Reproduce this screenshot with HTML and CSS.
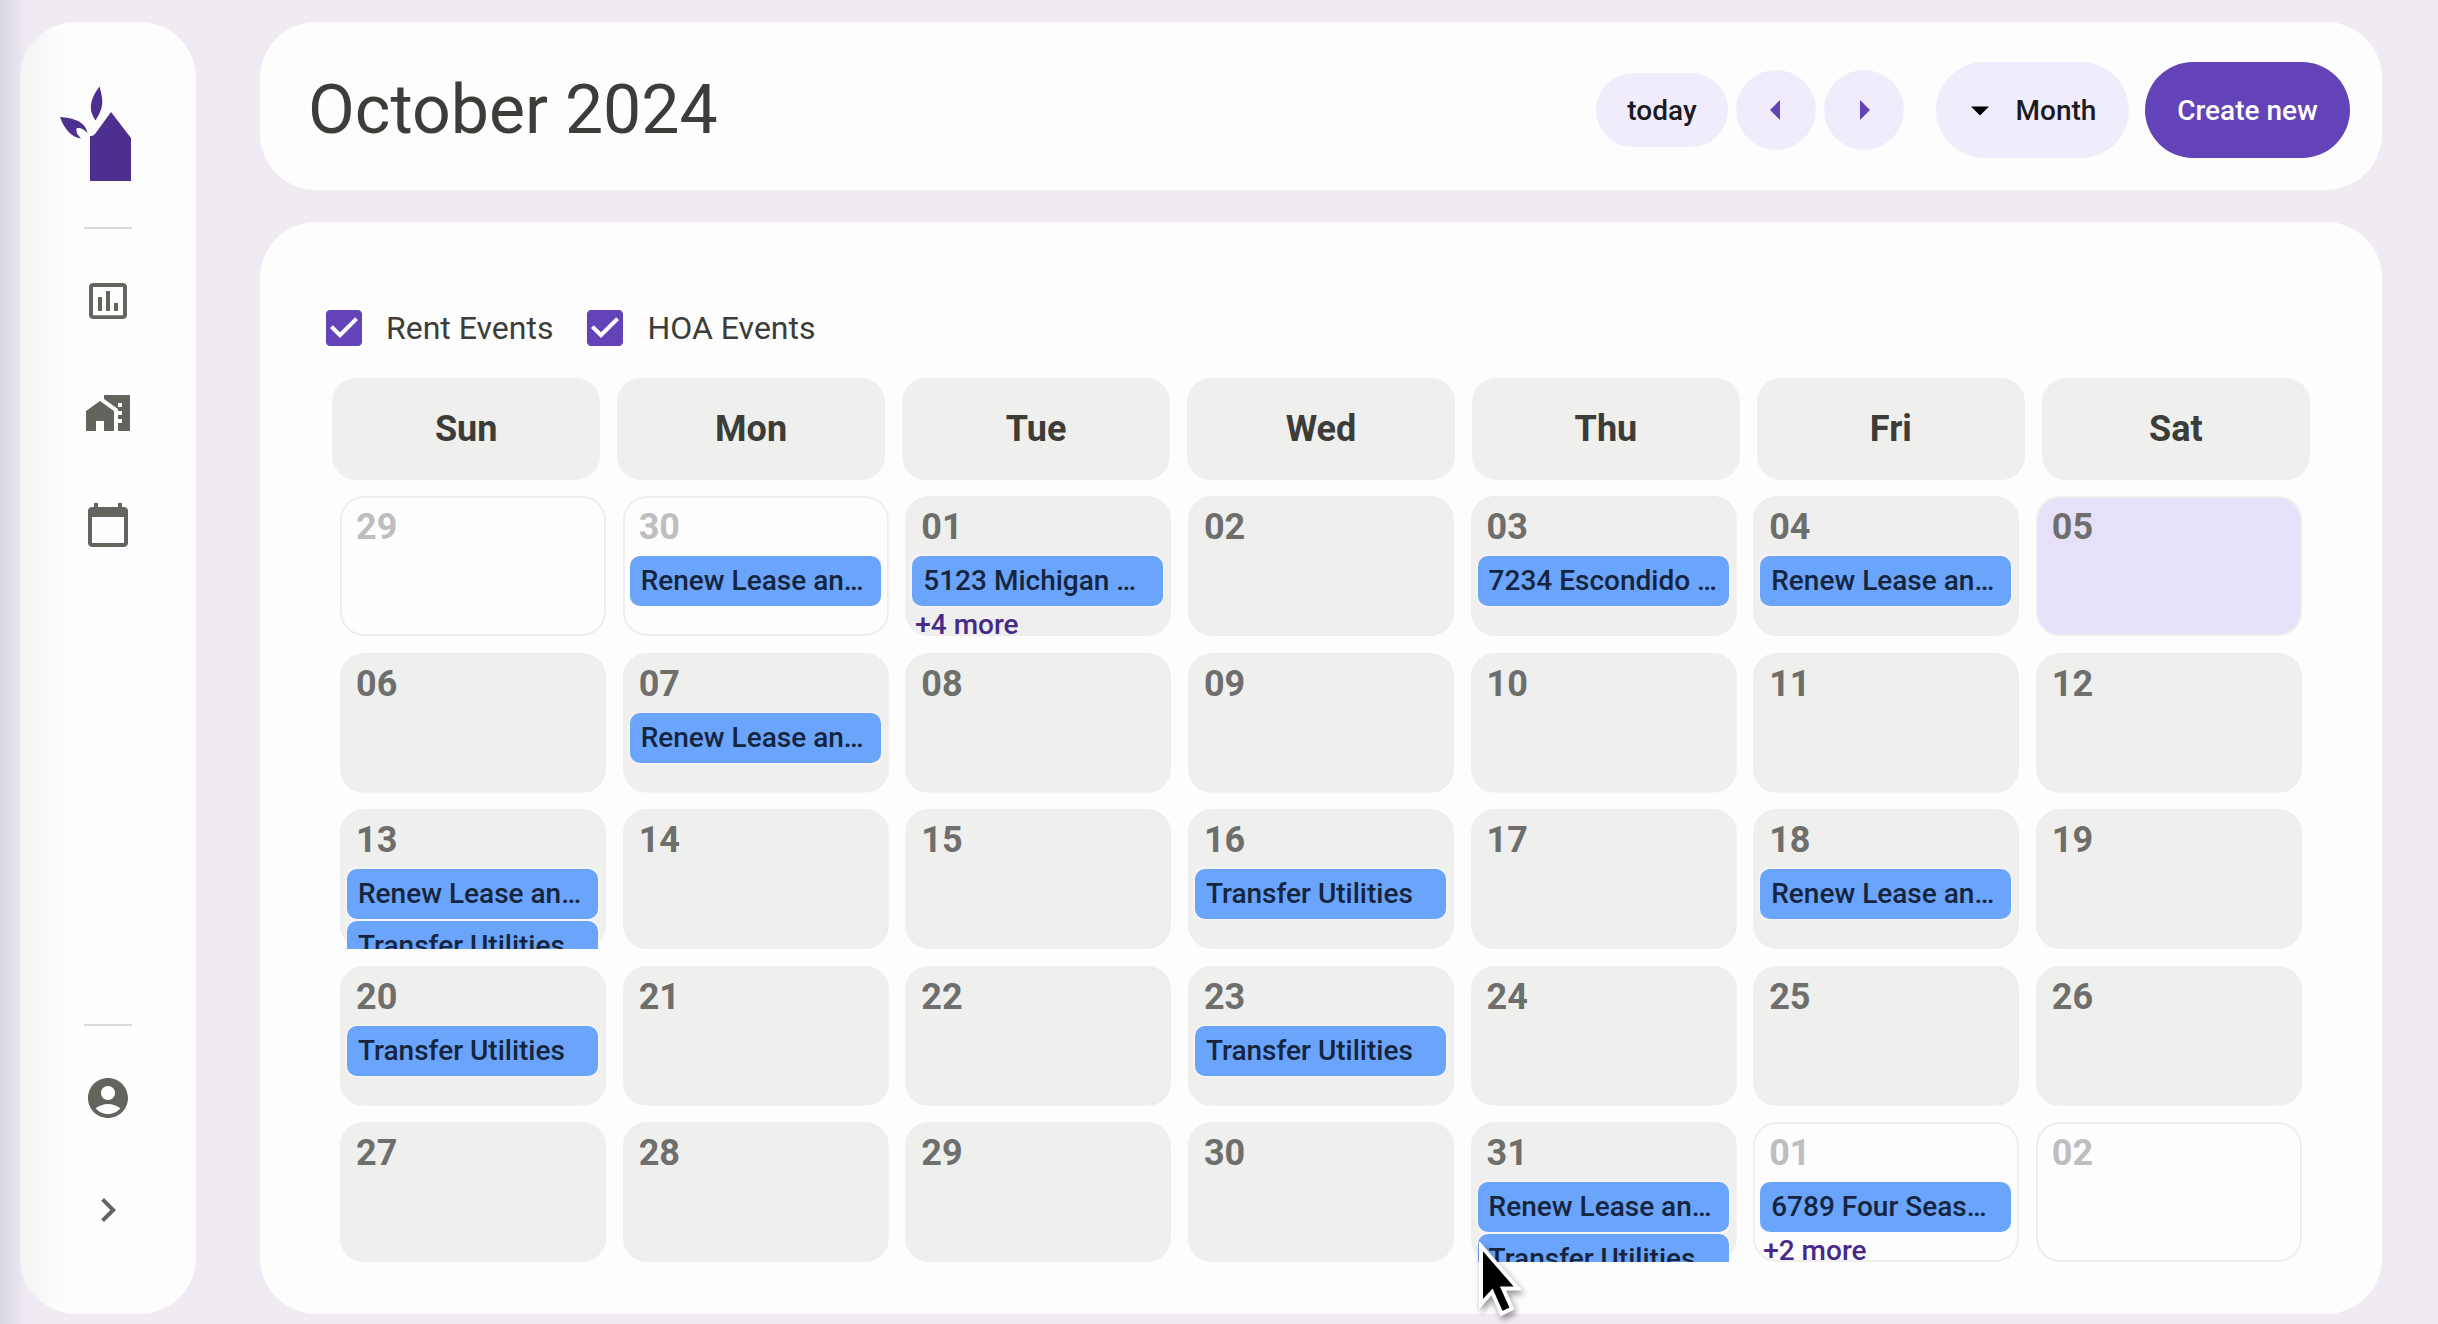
FILE: index.html
```html
<!DOCTYPE html>
<html lang="en">
<head>
<meta charset="utf-8">
<title>Calendar</title>
<link rel="stylesheet" href="styles.css">
</head>
<body>
<div class="app">
  <aside class="sidebar">
    <svg class="logo" viewBox="0 0 72 96" width="72" height="96"><path d="M39.500 0.500C43.500 15 44 21 35.500 34.500C28.500 25 29 14 39.500 0.500Z"/><path d="M0 31C13 31.500 26 36 27.500 47C24 43 19 41 16.500 42.500C16 47 18 49 21 52.500C12 51.500 4 43 0 31Z"/><path d="M30 95V50Q33 50.500 35 48L51 26L71 52V95Z"/></svg>
    <hr class="rule">
    <nav class="nav">
      <svg class="icon" viewBox="0 0 24 24"><path d="M9 17H7v-7h2v7zm4 0h-2V7h2v10zm4 0h-2v-4h2v4zm2.500 2.100h-15V5h15v14.100zm0-16.100h-15c-1.100 0-2 .9-2 2v14c0 1.100.9 2 2 2h15c1.100 0 2-.9 2-2V5c0-1.100-.9-2-2-2z"/></svg>
      <svg class="icon" viewBox="0 0 24 24"><path d="M1 11v10h5v-5h4v5h5V11L8 6z"/><path d="M10 3v1.970l7 5V11h2v2h-2v2h2v2h-2v4h6V3H10zm9 6h-2V7h2v2z"/></svg>
      <svg class="icon" viewBox="0 0 24 24"><path d="M20 3h-1V1h-2v2H7V1H5v2H4c-1.100 0-2 .9-2 2v16c0 1.100.9 2 2 2h16c1.100 0 2-.9 2-2V5c0-1.100-.9-2-2-2zm0 18H4V8h16v13z"/></svg>
    </nav>
    <div class="account">
      <hr class="rule">
      <svg class="icon" viewBox="0 0 24 24"><path d="M12 2C6.480 2 2 6.480 2 12s4.480 10 10 10 10-4.480 10-10S17.520 2 12 2zm0 4c1.930 0 3.500 1.570 3.500 3.500S13.930 13 12 13s-3.500-1.570-3.500-3.500S10.070 6 12 6zm0 14c-2.030 0-4.430-.82-6.140-2.880C7.550 15.800 9.680 15 12 15s4.450.8 6.140 2.120C16.430 19.180 14.030 20 12 20z"/></svg>
      <svg class="icon" viewBox="0 0 24 24"><path d="M10 6 8.590 7.410 13.170 12l-4.580 4.590L10 18l6-6z"/></svg>
    </div>
  </aside>
  <main class="main">
    <header class="topbar">
      <h1 class="title">October 2024</h1>
      <div class="actions">
        <button class="btn today">today</button>
        <button class="btn round"><svg width="14" height="20" viewBox="0 0 14 20"><path d="M11 0V20L1 10Z"/></svg></button>
        <button class="btn round"><svg width="14" height="20" viewBox="0 0 14 20"><path d="M3 0V20L13 10Z"/></svg></button>
        <button class="btn month"><svg width="18" height="10" viewBox="0 0 18 10"><path d="M0 0.500H18L9 9.500Z"/></svg>Month</button>
        <button class="btn create">Create new</button>
      </div>
    </header>
    <section class="panel">
      <div class="filters">
        <label class="filter"><svg class="check" viewBox="0 0 24 24"><path d="M19 3H5c-1.110 0-2 .9-2 2v14c0 1.100.89 2 2 2h14c1.110 0 2-.9 2-2V5c0-1.100-.89-2-2-2zm-9 14-5-5 1.410-1.410L10 14.170l7.590-7.590L19 8l-9 9z"/></svg>Rent Events</label>
        <label class="filter"><svg class="check" viewBox="0 0 24 24"><path d="M19 3H5c-1.110 0-2 .9-2 2v14c0 1.100.89 2 2 2h14c1.110 0 2-.9 2-2V5c0-1.100-.89-2-2-2zm-9 14-5-5 1.410-1.410L10 14.170l7.590-7.590L19 8l-9 9z"/></svg>HOA Events</label>
      </div>
      <div class="weekdays">
        <div>Sun</div><div>Mon</div><div>Tue</div><div>Wed</div><div>Thu</div><div>Fri</div><div>Sat</div>
      </div>
      <div class="days">
        <div class="day off"><b>29</b></div>
        <div class="day off"><b>30</b><p class="event">Renew Lease an…</p></div>
        <div class="day"><b>01</b><p class="event">5123 Michigan …</p><p class="more">+4 more</p></div>
        <div class="day"><b>02</b></div>
        <div class="day"><b>03</b><p class="event">7234 Escondido …</p></div>
        <div class="day"><b>04</b><p class="event">Renew Lease an…</p></div>
        <div class="day current"><b>05</b></div>
        <div class="day"><b>06</b></div>
        <div class="day"><b>07</b><p class="event">Renew Lease an…</p></div>
        <div class="day"><b>08</b></div>
        <div class="day"><b>09</b></div>
        <div class="day"><b>10</b></div>
        <div class="day"><b>11</b></div>
        <div class="day"><b>12</b></div>
        <div class="day"><b>13</b><p class="event">Renew Lease an…</p><p class="event">Transfer Utilities</p></div>
        <div class="day"><b>14</b></div>
        <div class="day"><b>15</b></div>
        <div class="day"><b>16</b><p class="event">Transfer Utilities</p></div>
        <div class="day"><b>17</b></div>
        <div class="day"><b>18</b><p class="event">Renew Lease an…</p></div>
        <div class="day"><b>19</b></div>
        <div class="day"><b>20</b><p class="event">Transfer Utilities</p></div>
        <div class="day"><b>21</b></div>
        <div class="day"><b>22</b></div>
        <div class="day"><b>23</b><p class="event">Transfer Utilities</p></div>
        <div class="day"><b>24</b></div>
        <div class="day"><b>25</b></div>
        <div class="day"><b>26</b></div>
        <div class="day"><b>27</b></div>
        <div class="day"><b>28</b></div>
        <div class="day"><b>29</b></div>
        <div class="day"><b>30</b></div>
        <div class="day"><b>31</b><p class="event">Renew Lease an…</p><p class="event">Transfer Utilities</p></div>
        <div class="day off"><b>01</b><p class="event">6789 Four Seas…</p><p class="more">+2 more</p></div>
        <div class="day off"><b>02</b></div>
      </div>
    </section>
  </main>
</div>
<svg class="cursor" width="50" height="76" viewBox="0 0 50 76"><path d="M3 4V62L14 50L23.500 71.500L34 66.500L25 46.500H40Z"/></svg>
</body>
</html>
```

FILE: styles.css
```css
* { box-sizing: border-box; }
body { margin: 0; background: #f0ebf4; font-family: Roboto, "Liberation Sans", sans-serif; color: #3c3c38; overflow: hidden; }
h1, p, hr { margin: 0; }
.app { display: flex; gap: 64px; height: 1324px; padding: 22px 56px 10px 20px; background: linear-gradient(90deg, #dbd8e2 0, #e0dde7 10px, #f0ebf3 26px); }
.sidebar { width: 176px; border-radius: 56px; background: linear-gradient(90deg, #f3f3f4 0, #fdfdfd 44px); display: flex; flex-direction: column; align-items: center; padding: 64px 0 80px; }
.logo { fill: #4d2f8f; margin-right: 24px; }
.rule { width: 48px; height: 2px; border: 0; background: #d9d9d6; }
.sidebar > .rule { margin-top: 45px; }
.nav { display: flex; flex-direction: column; gap: 64px; margin-top: 48px; }
.icon { width: 48px; height: 48px; fill: #64645f; display: block; }
.account { margin-top: auto; display: flex; flex-direction: column; align-items: center; gap: 64px; }
.account .rule { margin-bottom: -16px; }
.main { flex: 1; display: flex; flex-direction: column; gap: 32px; min-width: 0; }
.topbar, .panel { background: #fdfdfd; border-radius: 56px; }
.topbar { height: 168px; display: flex; align-items: center; justify-content: space-between; padding: 8px 32px 0 48px; }
.title { font-size: 68px; font-weight: 400; line-height: 80px; padding-bottom: 1px; }
.actions { display: flex; align-items: center; gap: 8px; }
.btn { border: 0; padding: 0; border-radius: 48px; background: #f1ecfb; font: 500 28px/40px Roboto, "Liberation Sans", sans-serif; color: #1b1b1f; display: flex; align-items: center; justify-content: center; }
.today { width: 132px; height: 74px; padding-top: 2px; }
.round { width: 80px; height: 80px; fill: #6344b8; }
.month { width: 193px; height: 96px; gap: 27px; margin: 0 8px 0 24px; padding: 2px 0 0 2px; }
.create { width: 205px; height: 96px; padding-top: 2px; background: #6344b8; color: #fff; }
.panel { flex: 1; padding: 82px 72px 0; }
.filters { display: flex; gap: 28px; margin-left: -12px; font-size: 32px; line-height: 48px; }
.filter { display: flex; gap: 18px; }
.check { width: 48px; height: 48px; fill: #6344b8; }
.weekdays { display: grid; grid-template-columns: repeat(7, 1fr); gap: 16.600px; margin-top: 26px; font-size: 36px; font-weight: 700; text-align: center; }
.weekdays div { height: 102px; line-height: 102px; border-radius: 24px; background: #efefee; }
.days { display: grid; grid-template-columns: repeat(7, minmax(0, 1fr)); grid-auto-rows: 140px; gap: 16.500px; margin: 16px 8px 0; }
.day { border: 2px solid #eeeeed; border-radius: 24px; background: #efefee; padding: 6px 6px 0 5px; clip-path: inset(0); }
.day b { display: block; height: 44px; padding: 0 0 0 9px; font-size: 36px; line-height: 46px; font-weight: 700; color: #6e6e6c; }
.off { background: transparent; }
.off b { color: #bebec0; }
.current { background: #e6e0f9; }
.event { height: 50px; margin: 8px 0 2px; padding: 0 11px; border-radius: 10px; background: #6ba4fb; box-shadow: 0 0 0 2px #fdfdfd55; color: #15253d; font-size: 28px; font-weight: 500; line-height: 49px; white-space: nowrap; }
.event + .event { margin-top: 2px; }
.more { padding-left: 3px; color: #472a88; font-size: 28px; font-weight: 500; line-height: 34px; }
.cursor { position: absolute; left: 1478px; top: 1242px; fill: #000; stroke: #fff; stroke-width: 4; filter: drop-shadow(2px 4px 3px #0006); }
```
